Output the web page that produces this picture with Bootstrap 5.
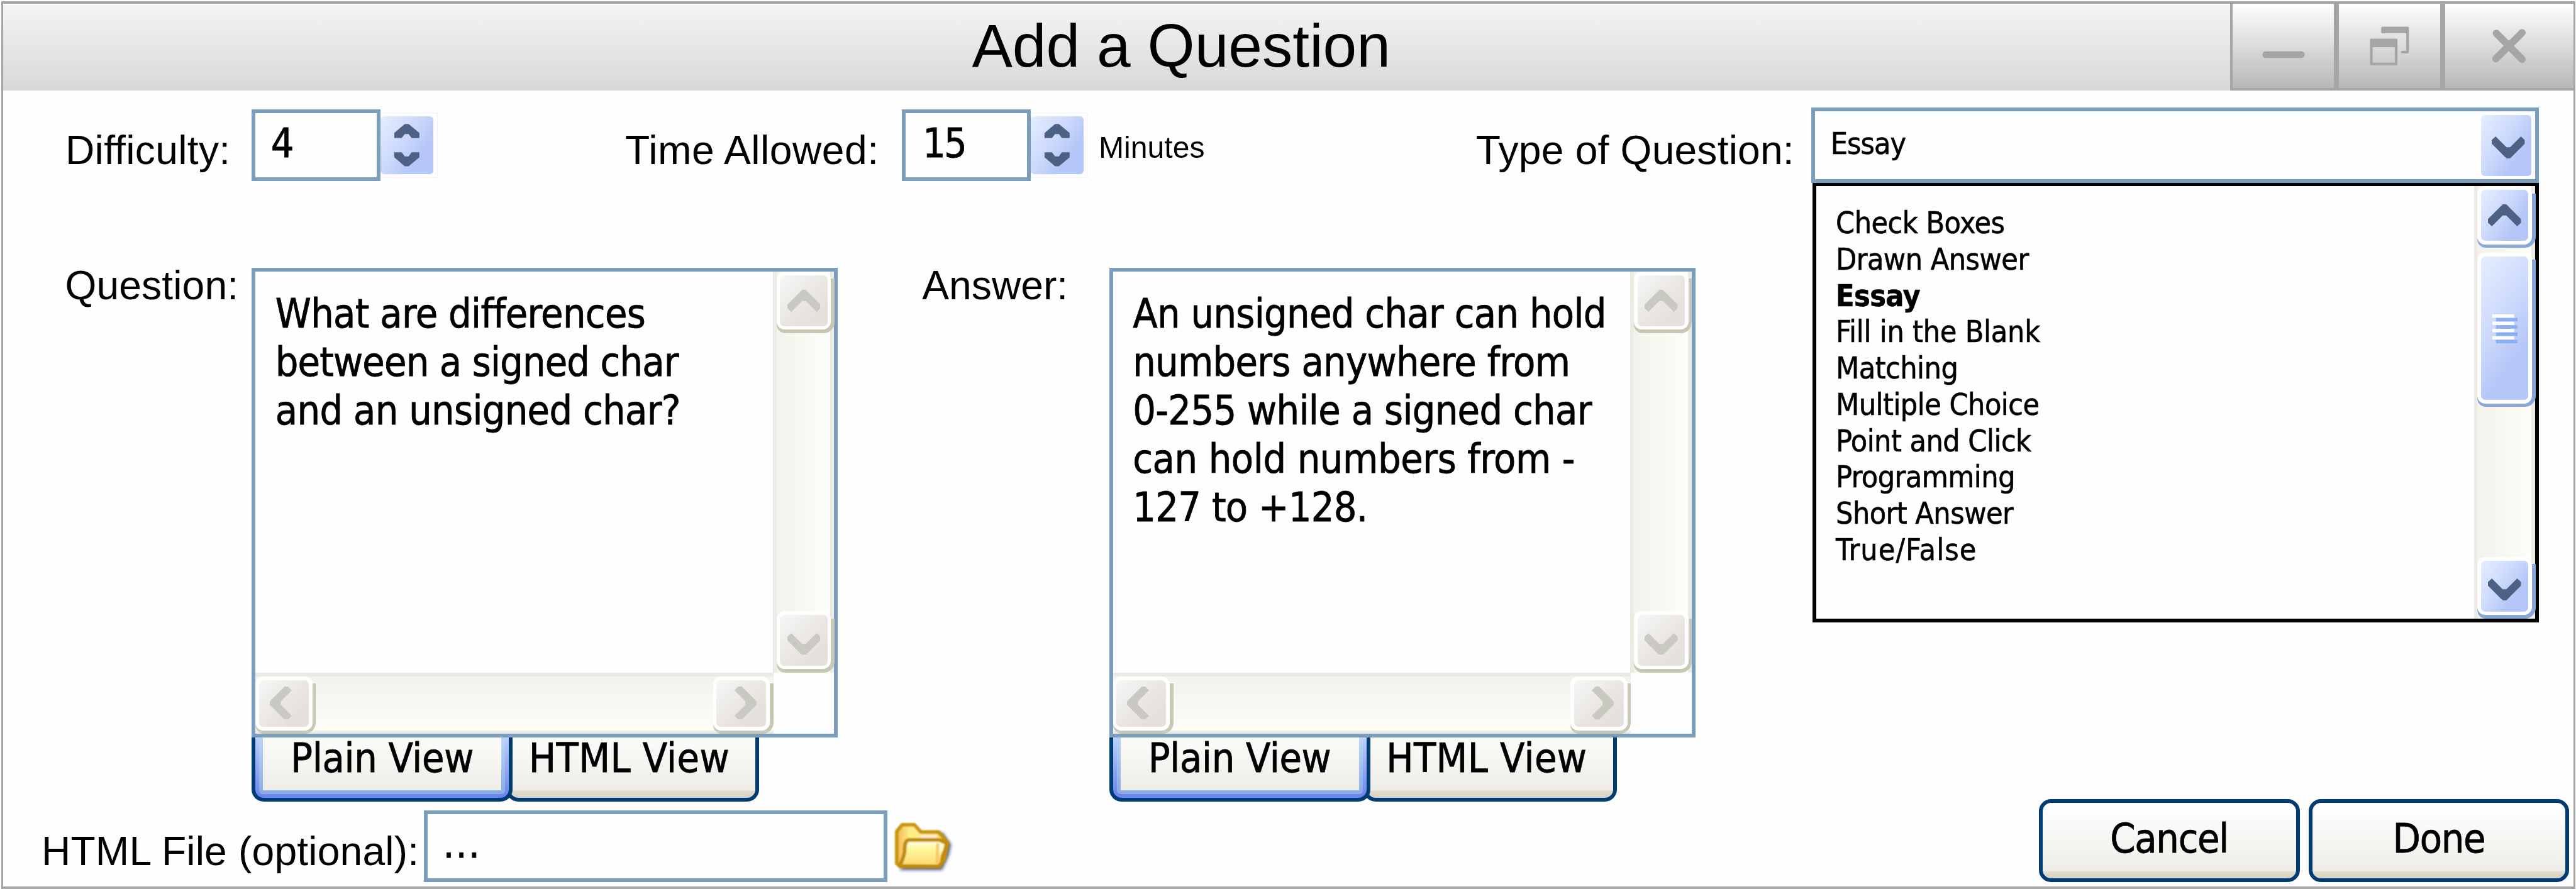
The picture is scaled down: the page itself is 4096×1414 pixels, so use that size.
<!DOCTYPE html>
<html lang="en">
<head>
<meta charset="utf-8">
<title>Add a Question</title>
<link href="https://cdn.jsdelivr.net/npm/bootstrap@5.3.0/dist/css/bootstrap.min.css" rel="stylesheet">
<style>
/* 1rem is one hundred design pixels */
html{font-size:96.218px}
body{background:#fff;color:#000;font-family:"Liberation Sans",Arial,sans-serif;font-size:.667rem;line-height:.8rem;width:4096px;height:1414px;overflow:hidden}
.win{margin:2px 1px 0 2px;height:1412px;border:solid #a5a5a5;border-width:4px 3px;background:#fefefe}
.titlebar{height:1.435rem;border-top:2px solid #fff;background:linear-gradient(#f4f4f4,#d8d8d8)}
.titlebar h1{font-size:1.0035rem;line-height:129px;margin:0;padding-left:16.01rem;font-weight:400}
.wbtn{height:1.435rem;margin-top:-2px;border:0 solid #a5a5a5;border-bottom-width:4px;border-left-width:8px;background:linear-gradient(#fefefe,#b8b8b8);padding:0;border-radius:0;width:1.76rem}
.wbtn svg{display:block;width:100%;height:100%}
.wbtn.first{width:1.72rem;border-left-width:4px}
.wbtn.last{width:2.2rem}
.main-area{height:11.71rem}
.left-area{width:24.338rem;padding-top:.315rem}
.right-area{padding-top:.285rem}
label{flex:none;white-space:nowrap}
.lb-difficulty{width:3.08rem;margin-top:.274rem;letter-spacing:.005em}
.lb-time{width:4.574rem;margin:.274rem 0 0 3.1rem;letter-spacing:.008em}
.lb-question{width:3.085rem;margin-top:-.104rem;letter-spacing:.002em}
.lb-answer{width:3.09rem;margin:-.104rem 0 0 1.395rem}
.lb-type{width:5.54rem;margin-top:.304rem;letter-spacing:.003em}
.lb-file{width:6.315rem;margin-top:.465rem;letter-spacing:.0028em}
.unit{margin:.325rem 0 0 .184rem}
.row-top{padding-left:1.028rem}
.row-text{padding-left:1.023rem;margin-top:1.435rem}
.ui{font-family:"DejaVu Sans Condensed","DejaVu Sans",sans-serif;font-stretch:condensed;-webkit-text-stroke:.012em #000}
.ui span,.ui li{white-space:nowrap}
.fld{flex:none;border:6px solid #7b9ebd;background:#fefefe}
.num{width:2.13rem;height:1.18rem;padding:.095rem 0 0 .255rem}
.two-digit{letter-spacing:-.045em;margin-left:.027rem}
.spin{flex:none;width:.94rem;height:1.08rem;margin-top:.05rem;border:1px solid #eef2fb;border-left:0;padding:.055rem .06rem .055rem 0}
.blue{background:linear-gradient(125deg,#e2ecff 5%,#cbd8fb 45%,#b5c6f8 72%);border-radius:.06rem}
.spin .blue,.dd .blue{width:100%;height:100%}
svg{display:block}
.small-t{font-size:.5rem;line-height:.6rem}
.combo{width:12.023rem;height:1.245rem;padding:.235rem 0 0 .26rem;letter-spacing:-.022em}
.combo .dd{width:.83rem;height:1.01rem;margin:-.18rem .055rem 0 0}
.combo svg{width:.547rem;height:.363rem;margin:.06rem 0 0 .06rem}
.droplist{margin-left:5.565rem;width:12rem;height:7.263rem;border:6px solid #000;border-top-width:5px;background:#fefefe}
.droplist ul{margin:0;padding:.312rem 0 0 .32rem;font-size:.5rem;line-height:.6rem;letter-spacing:-.012em}
.droplist .t-fill{letter-spacing:-.006em}
.droplist .t-tf{letter-spacing:.022em}
.area{width:9.685rem;height:7.761rem}
.area .txt{height:6.633rem;padding:.302rem 0 0 .328rem;letter-spacing:-.0107em}
.area .tight{letter-spacing:-.0135em}
.area .loose{letter-spacing:-.006em}
.vtrack{width:1.01rem;padding:0 .06rem;background:linear-gradient(90deg,#f3f2ed,#fdfef9) content-box,#ecebe3}
.htrack{height:1.01rem;width:8.56rem;padding:.06rem 0;background:linear-gradient(#f3f2ed,#fdfef8) content-box,#ecebe3}
/* a scrollbar button: its coloured edge shows right and below the white rim */
.sb{width:.96rem;height:1.02rem;margin-right:-.06rem;padding:0 .06rem .06rem 0;background:linear-gradient(var(--edge),var(--edge)) 0 .12rem no-repeat;border-radius:0 0 .18rem .14rem}
.sb .rim{width:100%;height:100%;background:#fff;border-radius:.13rem;padding:.06rem}
.sb .face{width:100%;height:100%;border-radius:.07rem;display:flex;align-items:center;justify-content:center}
.sb svg{width:.547rem;height:.363rem;fill:var(--ar);flex:none}
.off{--edge:#c9c8b4;--ar:#c9c9c2}
.off .face{background:linear-gradient(135deg,#f7f7f7,#eae7e3 50%,#e4e1dc 80%)}
.on{--edge:#89a7db;--ar:#4c6184}
.on .face{background:linear-gradient(125deg,#e2ecff 5%,#cbd8fb 45%,#b5c6f8 72%)}
.down svg{margin-top:.12rem}
.thumb{height:2.552rem;margin-top:.078rem}
.thumb svg{width:.42rem;height:.48rem;margin-top:.03rem}
.h.sb{width:1rem;height:.95rem;margin:0}
.h.sb svg{width:.363rem;height:.547rem}
.h.l svg{margin-right:.11rem}.h.r svg{margin-left:.13rem}
.tabs{height:1.061rem}
.tabbtn{display:flex;align-items:flex-start;border:6px solid #003c74;border-top:0;border-radius:0 0 .2rem .2rem;background:linear-gradient(#fbfbf9,#eeede8) 0 0/100% .88rem no-repeat,linear-gradient(#e0ddd1,#d6d2c5) 0 .88rem/100% .12rem;padding:0;height:1.061rem;line-height:.69rem;font-size:.667rem;color:#000}
.tabbtn.sel{width:4.313rem;background:linear-gradient(#b9d0fb,#6a82ee);padding:0 6px 6px;z-index:1;letter-spacing:-.005em}
.tabbtn.sel>div{width:100%;height:100%;border-radius:0 0 .06rem .06rem;padding:0 6px 6px;background:linear-gradient(#bcd4f8,#89ade4)}
.tabbtn.sel>div>div{height:100%;background:linear-gradient(#fbfbf9,#eeede8);padding-left:.458rem;text-align:left}
.tabbtn.plain{width:4.18rem;margin-left:-.107rem;padding-left:.31rem;letter-spacing:.006em}
.cmd{width:4.31rem;height:1.372rem;border:6px solid #003c74;border-radius:.2rem;background:linear-gradient(#fff,#eeede8) 0 0/100% 1.13rem no-repeat,linear-gradient(#e0ddd1,#d6d2c5) 0 1.13rem/100% .12rem;padding:0 0 .05rem;font-size:.667rem;line-height:.8rem;color:#000;letter-spacing:-.02em}
.cmd:last-child{margin:0 .07rem 0 .146rem}
.bottom-bar{padding-left:.633rem}
.path-in{width:7.67rem;height:1.19rem;margin-top:.187rem;padding:.1rem 0 0 .258rem;letter-spacing:.03em}
.folder{width:.94rem;height:.87rem;margin:.385rem 0 0 .12rem}
</style>
</head>
<body>
<svg width="0" height="0" class="position-absolute">
<symbol id="up" viewBox="0 0 55 36.5"><path d="M24.500 0h6L55 24.500v6l-6.500 6L30.500 18.500h-6L6.500 36.500 0 30.500v-6z"/></symbol>
<symbol id="dn" viewBox="0 0 55 36.5"><path d="M24.500 36.500h6L55 12V6L48.500 0 30.500 18h-6L6.500 0 0 6v6z"/></symbol>
<symbol id="lf" viewBox="0 0 36.500 55"><path d="M0 24.500v6L24.500 55h6l6-6.500L18.500 30.500v-6L36.500 6.500 30.500 0h-6z"/></symbol>
<symbol id="rt" viewBox="0 0 36.500 55"><path d="M36.500 24.500v6L12 55H6L0 48.500 18 30.500v-6L0 6.500 6 0h6z"/></symbol>
<symbol id="sp" viewBox="0 0 88 94.500"><path fill="#4c6184" d="M40.600 12h6.400l18 15v8.600H52l-5-6.800h-6.400l-5.100 6.800H23V27zM40.600 82.800h6.400l18-15v-8.400H52l-5 6.800h-6.400l-5.100-6.800H23v8.400z"/></symbol>
</svg>
<div class="win">
 <header class="titlebar d-flex justify-content-between align-items-start">
  <h1>Add a Question</h1>
  <div class="d-flex">
   <button class="wbtn first" aria-label="Minimize"><svg viewBox="3689 6 168 140"><rect x="3738" y="85" width="70.500" height="11" rx="5.500" fill="#a5a5a5"/></svg></button>
   <button class="wbtn" aria-label="Restore"><svg viewBox="3865 6 168 140" fill="#a5a5a5"><path d="M3937 44h42a2 2 0 0 1 2 2v40.500a2 2 0 0 1-2 2h-9a2.200 2.200 0 0 1 0-4.500h6.600V55H3937a2 2 0 0 1-2-2v-7a2 2 0 0 1 2-2z"/><path fill-rule="evenodd" d="M3918.300 64h41.700a2 2 0 0 1 2 2v40.300a2 2 0 0 1-2 2h-41.700a2 2 0 0 1-2-2V66a2 2 0 0 1 2-2zm2.500 14v26h36.700V78z"/></svg></button>
   <button class="wbtn last" aria-label="Close"><svg viewBox="4041 6 212 140" stroke="#a5a5a5" stroke-width="12" stroke-linecap="round"><path d="M4125.600 55l42.700 43.300M4168.300 54l-43.400 43.300"/></svg></button>
  </div>
 </header>
 <main class="main-area d-flex">
  <section class="left-area flex-shrink-0">
   <div class="row-top d-flex align-items-start">
    <label class="lb-difficulty">Difficulty:</label>
    <div class="fld num ui"><span>4</span></div>
    <div class="spin"><div class="blue"><svg width="100%" height="100%"><use href="#sp"/></svg></div></div>
    <label class="lb-time">Time Allowed:</label>
    <div class="fld num ui"><span class="two-digit">15</span></div>
    <div class="spin"><div class="blue"><svg width="100%" height="100%"><use href="#sp"/></svg></div></div>
    <span class="small-t unit">Minutes</span>
   </div>
   <div class="row-text d-flex align-items-start">
    <label class="lb-question">Question:</label>
    <div class="flex-shrink-0">
     <div class="fld area">
      <div class="d-flex">
       <div class="txt ui flex-grow-1"><span>What are differences</span><br><span class="tight">between a signed char</span><br><span>and an unsigned char?</span></div>
       <div class="vtrack d-flex flex-column justify-content-between off">
        <div class="sb"><div class="rim"><div class="face"><svg><use href="#up"/></svg></div></div></div>
        <div class="sb down"><div class="rim"><div class="face"><svg><use href="#dn"/></svg></div></div></div>
       </div>
      </div>
      <div class="htrack d-flex justify-content-between off">
       <div class="sb h l"><div class="rim"><div class="face"><svg><use href="#lf"/></svg></div></div></div>
       <div class="sb h r"><div class="rim"><div class="face"><svg><use href="#rt"/></svg></div></div></div>
      </div>
     </div>
     <div class="tabs d-flex ui">
      <button class="tabbtn sel position-relative"><div><div><span>Plain View</span></div></div></button>
      <button class="tabbtn plain"><span>HTML View</span></button>
     </div>
    </div>
    <label class="lb-answer">Answer:</label>
    <div class="flex-shrink-0">
     <div class="fld area">
      <div class="d-flex">
       <div class="txt ui flex-grow-1"><span>An unsigned char can hold</span><br><span>numbers anywhere from</span><br><span>0-255 while a signed char</span><br><span class="loose">can hold numbers from -</span><br><span>127 to +128.</span></div>
       <div class="vtrack d-flex flex-column justify-content-between off">
        <div class="sb"><div class="rim"><div class="face"><svg><use href="#up"/></svg></div></div></div>
        <div class="sb down"><div class="rim"><div class="face"><svg><use href="#dn"/></svg></div></div></div>
       </div>
      </div>
      <div class="htrack d-flex justify-content-between off">
       <div class="sb h l"><div class="rim"><div class="face"><svg><use href="#lf"/></svg></div></div></div>
       <div class="sb h r"><div class="rim"><div class="face"><svg><use href="#rt"/></svg></div></div></div>
      </div>
     </div>
     <div class="tabs d-flex ui">
      <button class="tabbtn sel position-relative"><div><div><span>Plain View</span></div></div></button>
      <button class="tabbtn plain"><span>HTML View</span></button>
     </div>
    </div>
   </div>
  </section>
  <section class="right-area flex-shrink-0">
   <div class="d-flex align-items-start">
    <label class="lb-type">Type of Question:</label>
    <div class="fld combo ui small-t d-flex justify-content-between"><span>Essay</span><div class="dd"><div class="blue d-flex align-items-center justify-content-center"><svg fill="#4c6184"><use href="#dn"/></svg></div></div></div>
   </div>
   <div class="droplist d-flex justify-content-between">
    <ul class="list-unstyled ui">
     <li><span>Check Boxes</span></li>
     <li><span>Drawn Answer</span></li>
     <li class="fw-bold"><span>Essay</span></li>
     <li class="t-fill"><span>Fill in the Blank</span></li>
     <li><span>Matching</span></li>
     <li><span>Multiple Choice</span></li>
     <li><span>Point and Click</span></li>
     <li><span>Programming</span></li>
     <li><span>Short Answer</span></li>
     <li class="t-tf"><span>True/False</span></li>
    </ul>
    <div class="vtrack d-flex flex-column on">
     <div class="sb"><div class="rim"><div class="face"><svg><use href="#up"/></svg></div></div></div>
     <div class="sb thumb"><div class="rim"><div class="face"><svg viewBox="0 0 42 48"><path fill="#fff" d="M0 0h36v5.700H0zM0 12h36v5.700H0zM0 24h36v5.700H0zM0 36h36v5.700H0z"/><path fill="#8aaff8" d="M6 6h36v5.700H6zM6 18h36v5.700H6zM6 30h36v5.700H6zM6 42h36v5.700H6z"/></svg></div></div></div>
     <div class="sb down mt-auto"><div class="rim"><div class="face"><svg><use href="#dn"/></svg></div></div></div>
    </div>
   </div>
  </section>
 </main>
 <footer class="bottom-bar d-flex align-items-start">
  <label class="lb-file">HTML File (optional):</label>
  <div class="fld path-in ui"><span>...</span></div>
  <svg class="folder" viewBox="0 0 94 87" overflow="visible">
   <defs>
    <linearGradient id="fb" x1="0" x2="1"><stop offset="0" stop-color="#f3b24f"/><stop offset=".25" stop-color="#ffef86"/><stop offset="1" stop-color="#f7dc7a"/></linearGradient>
    <linearGradient id="ff" x1="0" x2="0" y1="0" y2="1"><stop offset="0" stop-color="#fffff0"/><stop offset=".35" stop-color="#fff79a"/><stop offset="1" stop-color="#fbd76b"/></linearGradient>
    <filter id="bl" x="-20%" y="-20%" width="140%" height="140%"><feGaussianBlur stdDeviation="2.500"/></filter>
    <filter id="b2"><feGaussianBlur stdDeviation=".9"/></filter>
   </defs>
   <path filter="url(#bl)" fill="#4a5680" opacity=".9" d="M8 79h70l11-24 4-18-14-20-36 2z"/>
   <g filter="url(#b2)">
    <path fill="url(#fb)" stroke="#c8960f" stroke-width="6" stroke-linejoin="round" d="M3 68V15L12 4h20l11 12h29l15 18-6 28-8 11H9z"/>
    <path fill="#fbf0cc" d="M42 21h27v6H42z"/>
    <path fill="url(#ff)" stroke="#c08a0c" stroke-width="6" stroke-linejoin="round" d="M8 72c3-8 8-16 8-26 0-9 1-16 7-17h50l11 5c2 12-6 18-6 27 0 7-4 12-8 12z"/>
    <path fill="#fffbd0" d="M74 34l8 2-3 11-7 3z"/><path fill="#f5b95a" d="M68 34h5v34h-6z" opacity=".7"/>
   </g>
  </svg>
  <div class="d-flex ms-auto ui"><button class="cmd"><span>Cancel</span></button><button class="cmd"><span>Done</span></button></div>
 </footer>
</div>
<script src="https://cdn.jsdelivr.net/npm/bootstrap@5.3.0/dist/js/bootstrap.bundle.min.js"></script>
</body>
</html>
